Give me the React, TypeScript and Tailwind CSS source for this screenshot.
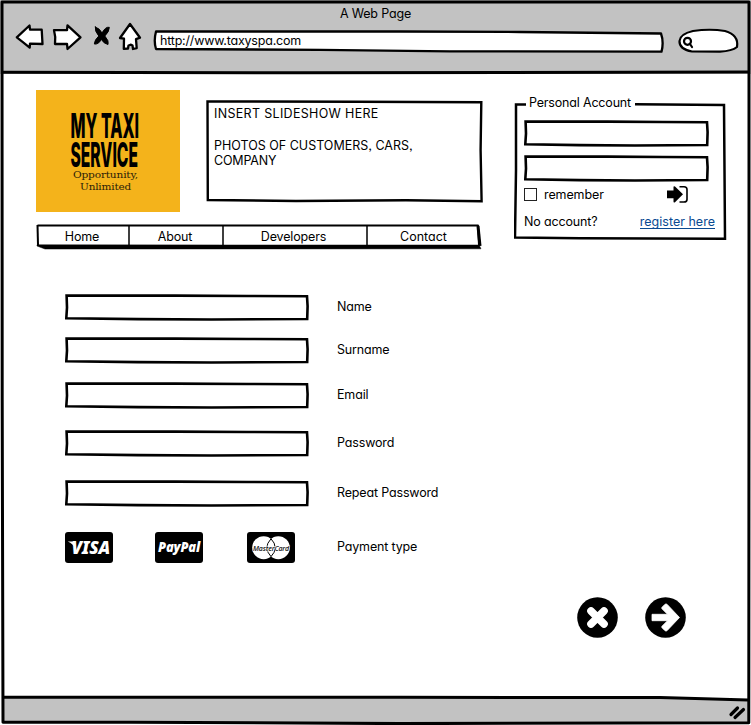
import React from "react";

const FONT = "font-['Inter','Liberation_Sans',sans-serif] font-[420] tracking-[-0.16px] [font-feature-settings:'cv11','ss03']";

function Field({ w, h, className = "" }: { w: number; h: number; className?: string }) {
  return (
    <div className={"relative shrink-0 " + className}>
      <input className="absolute inset-0 w-full bg-transparent px-2 text-[13px] outline-none" />
      <svg width={w} height={h} className="block" fill="none" stroke="#000" strokeWidth="2.6" strokeLinejoin="miter">
        <path d={`M1.6 1.5 L${w * 0.45} 1.6 L${w * 0.75} 2 L${w - 2} 2.2 L${w - 1.4} ${h * 0.45} L${w - 1.8} ${h - 2} L${w * 0.6} ${h - 1.5} L${w * 0.3} ${h - 1.9} L1.3 ${h - 2.8} L2 ${h * 0.5} Z`} />
      </svg>
    </div>
  );
}

function Toolbar() {
  return (
    <header className="flex h-[74px] shrink-0 flex-col bg-[#c2c2c2]">
      <h1 className="h-[27px] pt-[4px] text-center text-[12.5px] leading-[19px]">A Web Page</h1>
      <div className="flex h-[30px] items-start pl-[14px]">
        <svg width="130" height="30" viewBox="14 22 130 30" className="-mt-[5px] shrink-0" fill="#fff" stroke="#000" strokeWidth="2.3" strokeLinejoin="round" strokeLinecap="round">
          <path d="M16.8 37.3 L29.5 25.5 L30 29.7 L41.7 29.7 L42.5 44 L30 43.6 L29.7 47.7 Q23 42 16.8 37.3Z" />
          <path d="M54 30.2 L67 30.2 L67.5 25.3 L80.5 37.3 L67.5 49 L67 43.8 L55 44 Q56 37 54 30.2Z" />
          <path d="M95.3 27 Q100 28.5 102 33 Q105.5 26.5 109.3 27.3 Q109.5 31.5 104.8 36 Q109.3 41 108 44.5 Q103.5 43.5 101.5 39.5 Q98 44.8 94.3 44 Q94.5 40 98.8 36 Q94.5 31 95.3 27Z" fill="#000" strokeWidth="1" />
          <path d="M130 24 L140 37.7 L136 39.2 L136.7 48.2 L133 49 L132.5 45.5 L131 44.7 L128.5 45.5 L128 48.5 L123.8 48.8 L124 38.7 L120 38 Z" />
        </svg>
        <div className="relative ml-[9px] mt-[1px] h-[26px] w-[513px] shrink-0">
          <svg width="513" height="26" viewBox="153 28 513 26" className="absolute inset-0" fill="#fff" stroke="#000" strokeWidth="2.3" strokeLinejoin="round">
            <path d="M156 31.5 L400 31.5 L520 32 L661 33.5 Q664 42 661.5 51.7 L450 51.3 L320 49.8 L156 49 Q153.5 41 156 31.5Z" />
          </svg>
          <span className="absolute left-[7px] top-[4px] text-[12.5px] leading-[18px] tracking-[-0.2px]">http://www.taxyspa.com</span>
        </div>
        <svg width="64" height="28" viewBox="677 27 64 28" className="ml-[11px] shrink-0" fill="#fff" stroke="#000" strokeWidth="2.2" strokeLinecap="round">
          <path d="M693 31 Q710 28.5 725 31 Q739 35 737 47 Q732 51 720 51.7 L692 51.5 Q679 49 679.5 41 Q680 34 693 31Z" />
          <circle cx="687.5" cy="41.3" r="3.5" />
          <path d="M690 44 L692 47" />
        </svg>
      </div>
    </header>
  );
}

function Frame() {
  return (
    <svg width="751" height="725" className="pointer-events-none absolute inset-0" fill="none" stroke="#000" strokeWidth="3" strokeLinejoin="round">
      <path d="M2 2 L749 2 L749 350 L748.8 722.7 L400 723.6 L130 722.2 L3 722.3 L2.2 400 Z" />
      <path d="M2 72.3 L300 72.8 L748 72" />
      <path d="M2 697.3 L400 697.3 L660 697.5 L748 700" />
      <path d="M731 714.5 L737.5 708 M735 717.5 L743.5 709.5" strokeWidth="3.2" strokeLinecap="round" />
    </svg>
  );
}

function Logo() {
  return (
    <svg width="144" height="122" viewBox="36 90 144 122" className="shrink-0 bg-[#f4b31b]">
      <g fontFamily="Inter, 'Liberation Sans', sans-serif" fontWeight="800" fontSize="33.5" letterSpacing="0">
        <text transform="translate(70.5 138) scale(0.52 1)" textLength="132" lengthAdjust="spacingAndGlyphs">MY TAXI</text>
        <text transform="translate(70.5 167) scale(0.5 1)" textLength="135" lengthAdjust="spacingAndGlyphs">SERVICE</text>
      </g>
      <g fontFamily="'DejaVu Serif', serif" fontSize="9.5" fill="#2b2108" fontWeight="400">
        <text x="73" y="177.5" textLength="65" lengthAdjust="spacingAndGlyphs">Opportunity,</text>
        <text x="80" y="189.5" textLength="51" lengthAdjust="spacingAndGlyphs">Unlimited</text>
      </g>
    </svg>
  );
}

function Nav() {
  return (
    <nav className="relative mt-[11px] h-[27px] w-[446px]">
      <svg width="446" height="27" viewBox="36 223 446 27" className="absolute inset-0" fill="none" stroke="#000" strokeLinejoin="round">
        <path d="M37.5 225.5 L250 225.6 L478 225.6 L479 245" strokeWidth="2" />
        <path d="M478 226 L480 246" strokeWidth="3" />
        <path d="M37.5 225 L38 245" strokeWidth="2" />
        <path d="M37 244.8 L240 245 L479 245 L481 248.8 L45 249 L37 246Z" fill="#000" strokeWidth="0.5" />
        <path d="M129 225 V246 M223 225 V246 M367 225 V246" strokeWidth="1.5" />
      </svg>
      <ul className="relative flex h-full text-center text-[12.5px] leading-[27px]">
        <li className="w-[92px]">Home</li>
        <li className="w-[94px]">About</li>
        <li className="w-[143px]">Developers</li>
        <li className="w-[117px] tracking-normal">Contact</li>
      </ul>
    </nav>
  );
}

function Account() {
  return (
    <section className="relative ml-[31px] mt-[5px] h-[146px] w-[213px]">
      <svg width="213" height="146" viewBox="514 95 213 146" className="absolute inset-0" fill="none" stroke="#000" strokeWidth="2.5">
        <path d="M526 104.4 L516 104.4 L516 170 L515 237.5 L580 238.3 L725 238.8 L724.5 170 L724 105 L635 104.3" />
      </svg>
      <div className="relative flex h-full flex-col pl-[10px]">
        <h2 className="pl-[5px] text-[12.5px] leading-[15px] tracking-[-0.18px]">Personal Account</h2>
        <Field w={185} h={27} className="-ml-[0.5px] mt-[10px] w-[185px]" />
        <Field w={185} h={27} className="-ml-[0.5px] mt-[8px] w-[185px]" />
        <div className="mt-[3px] flex h-[19px] items-center">
          <span className="size-[13px] border border-[#222] bg-white" />
          <span className="ml-[7px] mt-[1px] text-[12.5px] tracking-[-0.1px]">remember</span>
          <svg width="24" height="20" viewBox="665 185 24 20" className="ml-auto mr-[38px]">
            <path d="M667 190.5 H673.5 V187.2 Q673.5 185.6 675 186.6 L683 194.3 L675 202.2 Q673.5 203.2 673.5 201.6 V198.2 H667Z" />
            <path d="M679.5 186.8 H684 Q687 186.8 687 189.5 V199.4 Q687 202 684 202 H679.5" fill="none" stroke="#000" strokeWidth="1.6" />
          </svg>
        </div>
        <div className="mt-[10px] flex w-[191px] justify-between text-[12.5px] leading-[15px]">
          <span>No account?</span>
          <a className="h-[15px] border-b border-[#0a4a92] leading-[15px] tracking-[0.02px] text-[#0a4a92]">register here</a>
        </div>
      </div>
    </section>
  );
}

function Payments() {
  const font = { fontFamily: "'Open Sans', sans-serif", fontStyle: "italic" };
  return (
    <div className="flex w-[272px] shrink-0">
      <svg width="48" height="31" className="rounded-[3px] bg-black" fill="#fff">
        <text x="6.5" y="22.4" fontSize="18" fontWeight={800} textLength="38.5" lengthAdjust="spacingAndGlyphs" {...font}>VISA</text>
        <path d="M2.8 9.4 H9 L11 17 Q8 11.5 2.8 9.4Z" />
      </svg>
      <svg width="48" height="31" className="ml-[42px] rounded-[3px] bg-black" fill="#fff">
        <text x="3" y="19.5" fontSize="13.3" fontWeight={800} textLength="42" lengthAdjust="spacingAndGlyphs" {...font}>PayPal</text>
      </svg>
      <svg width="48" height="31" className="ml-[44px] rounded-[3px] bg-black" fill="#fff">
        <circle cx="16.7" cy="15.7" r="11.5" />
        <circle cx="31.3" cy="15.7" r="11.5" />
        <path d="M24 6.8 Q28.2 11 28.2 15.7 T24 24.6 Q19.8 20 19.8 15.7 T24 6.8Z" stroke="#000" strokeWidth="1" />
        <text x="6" y="18.5" fontSize="7.9" fill="#111" fontWeight={600} stroke="#fff" strokeWidth="1" paintOrder="stroke" textLength="36" lengthAdjust="spacingAndGlyphs" {...font}>MasterCard</text>
      </svg>
    </div>
  );
}

const rows = [
  { label: "Name", gap: "mt-0" },
  { label: "Surname", gap: "mt-[16px]" },
  { label: "Email", gap: "mt-[18px]" },
  { label: "Password", gap: "mt-[21px]" },
  { label: "Repeat Password", gap: "mt-[23px]" },
];

export default function App() {
  return (
    <div className={"relative flex h-[725px] w-[751px] flex-col overflow-hidden bg-white text-black " + FONT}>
      <Toolbar />
      <main className="flex-1 pt-[16px]">
        <div className="flex h-[162px] pl-[36px]">
          <div>
            <div className="flex">
              <Logo />
              <div className="relative ml-[26px] mt-[10px] h-[102px] w-[277px] text-[12.5px] leading-[15.7px]">
                <svg width="277" height="103" className="absolute inset-0" fill="none" stroke="#000" strokeWidth="2.4">
                  <path d="M1.5 1.5 L150 1.7 L275.3 2.2 L274.6 50 L275.6 101.3 L200 100.3 L90 101 L1.8 100 Z" />
                </svg>
                <p className="relative pl-[8px] pt-[6px] tracking-[0.32px]">INSERT SLIDESHOW HERE</p>
                <p className="relative pl-[8px] pt-[16px] tracking-[0px]">PHOTOS OF CUSTOMERS, CARS,<br /><span className="tracking-[-0.2px]">COMPANY</span></p>
              </div>
            </div>
            <Nav />
          </div>
          <Account />
        </div>
        <form className="mt-[42px] pl-[65px] text-[12.5px]">
          {rows.map((r) => (
            <label key={r.label} className={"flex h-[27px] items-center " + r.gap}>
              <Field w={244} h={27} className="w-[244px]" />
              <span className="ml-[28px]">{r.label}</span>
            </label>
          ))}
          <div className="mt-[25px] flex h-[31px] items-center">
            <Payments />
            <span>Payment type</span>
          </div>
          <div className="mt-[34px] flex gap-[27px] pl-[511.5px]">
            <svg width="41" height="41">
              <circle cx="20.5" cy="20.5" r="20.3" />
              <path d="M14 14 L27 27 M27 14 L14 27" stroke="#fff" strokeWidth="5.4" strokeLinecap="square" />
              <path d="M14 14 L27 27 M27 14 L14 27" stroke="#fff" strokeWidth="7.6" strokeLinecap="round" />
            </svg>
            <svg width="41" height="41">
              <circle cx="20.5" cy="20.5" r="20.3" />
              <path d="M7 17.3 H22.5 L17 11.8 Q16.4 11 17 10.3 L20 7.3 Q21 6.6 22 7.3 L34.5 20.5 L22 33.7 Q21 34.4 20 33.7 L17 30.7 Q16.4 30 17 29.2 L22.5 23.7 H7Z" fill="#fff" stroke="#fff" strokeWidth="0.8" strokeLinejoin="round" />
            </svg>
          </div>
        </form>
      </main>
      <svg width="751" height="28" viewBox="0 697 751 28" className="shrink-0">
        <path d="M2 697 H660 L748 700 V723 H2Z" fill="#c2c2c2" />
      </svg>
      <Frame />
    </div>
  );
}
